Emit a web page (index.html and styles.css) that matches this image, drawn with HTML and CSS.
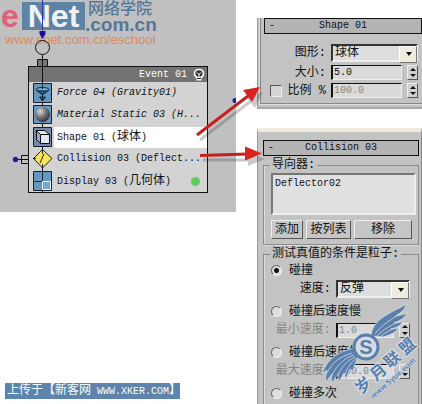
FILE: index.html
```html
<!DOCTYPE html>
<html lang="zh-CN">
<head>
<meta charset="utf-8">
<title>Event 01</title>
<link rel="stylesheet" href="styles.css">
</head>
<body>
<main class="page">
  <section class="left">
    <div class="scene">
      <div class="brand">
        <div class="brand-row">
          <span class="brand-e">e</span><span class="brand-net">Net</span>
          <span class="brand-side"><span class="brand-cn">网络学院</span><span class="brand-com">.com.cn</span></span>
        </div>
        <div class="brand-url">www.enet.com.cn/eschool</div>
      </div>
      <svg class="wires" width="236" height="212" viewBox="0 0 236 212" aria-hidden="true">
        <path d="M42.500 0V32" stroke="#3a329a"/>
        <path d="M39.500 31h6v3l-3 5-3-5z" fill="#1c0c9c"/>
        <circle cx="42.500" cy="47.500" r="7" fill="none" stroke="#111"/>
        <path d="M37.500 59.500h10v7h-10z" fill="#777" stroke="#111"/>
        <path d="M42.500 55V66M16 159.500h12M21.500 155.500h7v8h-7z" fill="none" stroke="#111"/>
        <circle cx="15.500" cy="159.500" r="2.700" fill="#1c1c9c"/>
        <circle cx="235" cy="100.500" r="2.500" fill="#1c1c9c"/>
      </svg>
      <div class="node">
        <header class="node-head">
          <span>Event 01</span>
          <svg width="12" height="14" viewBox="0 0 12 14" aria-hidden="true">
            <path d="M4 9.500C0 7 1 1.500 6 1.500s6 5.500 2 8z" fill="#333" stroke="#fff" stroke-width="1.500"/>
            <path d="M4 4.500l2 2 2-2M6 6v3" fill="none" stroke="#fff"/>
            <path d="M3.500 9h5v3.500h-5z" fill="#fff"/><path d="M4 10.500h4" stroke="#222"/>
          </svg>
        </header>
        <ul class="ops">
          <li class="op op-italic">
            <svg width="20" height="20" viewBox="0 0 20 20" aria-hidden="true"><path d="M.5.5h18v19H.5z" fill="#6796bf" stroke="#16212d"/><ellipse cx="9.500" cy="6.500" rx="6.500" ry="2" fill="#83abc9" stroke="#102c42"/><path d="M3 7l5 4h3l5-4M9.500 0v6M9.500 11v7M6.500 14l3 4 3-4z" fill="#245071" stroke="#102c42"/></svg>
            <span>Force 04 (Gravity01)</span></li>
          <li class="op op-italic">
            <svg width="20" height="20" viewBox="0 0 20 20" aria-hidden="true"><defs><radialGradient id="ball" cx=".35" cy=".3" r=".75"><stop stop-color="#ddd"/><stop offset=".4" stop-color="#8a8888"/><stop offset="1" stop-color="#2c2c30"/></radialGradient></defs><path d="M.5.5h18v18H.5z" fill="#6796bf" stroke="#16212d"/><circle cx="9.500" cy="9.500" r="7.500" fill="url(#ball)"/></svg>
            <span>Material Static 03 (H...</span></li>
          <li class="op op-selected">
            <svg width="20" height="20" viewBox="0 0 20 20" aria-hidden="true"><path d="M.5.5h18v19H.5z" fill="#7687aa" stroke="#16212d"/><path d="M3.500 3.500h8l5 4v9h-9l-4-4z" fill="#e4e8ef" stroke="#111"/><path d="M3.500 3.500l4 4v9l-4-4z" fill="#a0a9bd" stroke="#111"/><path d="M7.500 7.500h9" stroke="#111"/></svg>
            <span>Shape 01 (<b>球体</b>)</span></li>
          <li class="op">
            <svg width="20" height="20" viewBox="0 0 20 20" aria-hidden="true"><path d="M9.500.5l9.500 9-9.500 9.500-9-9.500z" fill="#f6e45a" stroke="#222"/><path d="M9.500 0v5M9.500 15v5M0 9.500h3M7 14l4-9" stroke="#222" fill="none"/></svg>
            <span>Collision 03 (Deflect...</span></li>
          <li class="op">
            <svg width="20" height="20" viewBox="0 0 20 20" aria-hidden="true"><path d="M.5.5h18v19H.5z" fill="#6796bf" stroke="#16212d"/><path d="M9.500 0v20M0 10.500h19" stroke="#16324a"/><path d="M9.500 10.500h8v8h-8z" fill="#78a7c9" stroke="#eafcff"/></svg>
            <span>Display 03 (<b>几何体</b>)</span><i class="dot"></i></li>
        </ul>
      </div>
    </div>
    <p class="upload"><b>上传于【新客网</b> WWW.XKER.COM<b>】</b></p>
  </section>

  <section class="right">
    <form class="panel shape-panel">
      <div class="frame">
        <h2 class="rollout"><span>-</span>Shape 01</h2>
        <div class="fields">
          <label for="shape">图形:</label>
          <span class="select"><select id="shape"><option>球体</option></select></span>
          <label for="size">大小:</label>
          <span class="spin"><input id="size" type="text" value="5.0"><span class="steps"><button type="button" aria-label="+"></button><button type="button" aria-label="-"></button></span></span>
          <span class="scale"><input id="scale-on" type="checkbox"><label for="scale-on">比例 %</label></span>
          <span class="spin off"><input type="text" value="100.0" aria-label="比例 %"><span class="steps"><button type="button" aria-label="+"></button><button type="button" aria-label="-"></button></span></span>
        </div>
      </div>
    </form>
    <form class="panel collision-panel">
      <h2 class="rollout"><span>-</span>Collision 03</h2>
      <fieldset class="group">
        <legend>导向器:</legend>
        <div class="list">Deflector02</div>
        <div class="buttons"><button type="button">添加</button><button type="button">按列表</button><button type="button">移除</button></div>
      </fieldset>
      <fieldset class="group tests">
        <legend>测试真值的条件是粒子:</legend>
        <label class="radio"><input type="radio" name="test" checked>碰撞</label>
        <div class="sub"><label for="speed">速度:</label><span class="select"><select id="speed"><option>反弹</option></select></span></div>
        <label class="radio"><input type="radio" name="test">碰撞后速度慢</label>
        <div class="sub off"><label for="min">最小速度:</label><span class="spin"><input id="min" type="text" value="1.0"><span class="steps"><button type="button" aria-label="+"></button><button type="button" aria-label="-"></button></span></span></div>
        <label class="radio"><input type="radio" name="test">碰撞后速度快</label>
        <div class="sub off"><label for="max">最大速度:</label><span class="spin"><input id="max" type="text" value="100.0"><span class="steps"><button type="button" aria-label="+"></button><button type="button" aria-label="-"></button></span></span></div>
        <label class="radio"><input type="radio" name="test">碰撞多次</label>
      </fieldset>
    </form>
  </section>

  <svg class="overlay" width="422" height="404" viewBox="0 0 422 404" aria-hidden="true">
    <g opacity=".25" transform="translate(3 5)"><path d="M197 135L248 96" stroke="#333" stroke-width="3"/><path d="M260 87l-8 16-9-11z" fill="#333"/><path d="M200 155h48" stroke="#333" stroke-width="3"/><path d="M262 154l-17 7v-14z" fill="#333"/></g>
    <path d="M197 135L248 96M200 155.500L248 154" stroke="#c5221f" stroke-width="3"/>
    <path d="M260 87l-8 15-9-12zM262 153.500l-17 7v-14z" fill="#d8231d"/>
    <g fill="#5b7fab" stroke="#d5dce5" stroke-width=".8">
      <path d="M371 336c2-16 13-20 36-32-3 6-6 9-11 12 5-1 9-2 11-3-3 6-8 8-13 10 4 0 7-1 9-2-3 6-8 7-12 8l7-1c-3 5-8 7-15 9z"/>
      <path d="M375 334c6-9 16-14 27-22M377 336c6-7 14-10 24-16M380 337c5-5 12-8 20-11" fill="none"/>
      <path d="M354 348c-10 3-25 6-32 26l5-4c-1 5-2 8-1 12l6-8c-1 4-1 6 0 9l6-9c0 4 0 6 1 8l5-9 2 6 4-10 3 2c2-8 4-12 6-15z"/>
      <path d="M352 353c-12 4-20 9-25 20M354 355c-9 3-17 10-22 20M355 357c-8 4-13 9-17 18M357 358c-6 4-10 10-12 17" fill="none"/>
    </g>
    <circle cx="366" cy="347" r="12" fill="#d5dce5" stroke="#5b7fab" stroke-width="3"/>
    <text class="seal-s" x="366" y="354" text-anchor="middle">S</text>
    <g transform="translate(363 385) rotate(-41)"><text class="seal-cn" x="-8" y="6">岁</text></g>
    <g transform="translate(378 372) rotate(-41)"><text class="seal-cn" x="-8" y="6">月</text></g>
    <g transform="translate(392 359) rotate(-41)"><text class="seal-cn" x="-8" y="6">联</text></g>
    <g transform="translate(407 346) rotate(-41)"><text class="seal-cn" x="-8" y="6">盟</text></g>
    <g transform="translate(373 399) rotate(-41)"><text class="seal-url">www.5yue.com</text></g>
  </svg>
</main>
</body>
</html>
```
FILE: styles.css
```css
* { box-sizing: border-box; }
body {
  margin: 0;
  background: #fff;
  color: #111;
  font: 10px/16px "Liberation Mono", "Noto Sans CJK SC", monospace;
}
b { font-size: 12px; font-weight: 400; }
.page {
  position: relative;
  display: grid;
  grid-template-columns: 236px minmax(0, 1fr);
  min-height: 100vh;
  overflow: hidden;
}
.left { display: flex; flex-direction: column; justify-content: space-between; }
.scene { position: relative; height: 212px; background: #c0c0c0; }
.wires, .overlay { position: absolute; top: 0; left: 0; }
.overlay { pointer-events: none; }

.brand { position: absolute; top: 2px; left: 0; font-family: "Liberation Sans", "Noto Sans CJK SC", sans-serif; }
.brand-row { display: flex; height: 28px; line-height: 28px; font-weight: 700; }
.brand-e { width: 22px; padding-left: 1px; color: #e06079; font-size: 32px; }
.brand-net { width: 63px; background: #5e83a5; color: #eef2f4; font-size: 32px; text-align: center; }
.brand-side { display: flex; flex-direction: column; color: #55779a; }
.brand-cn { padding-left: 3px; font-size: 16px; line-height: 14px; font-weight: 500; }
.brand-com { font-size: 19px; line-height: 18px; }
.brand-url { padding: 2px 0 0 5px; color: #dd8a5c; font-size: 13px; line-height: 16px; }

.node {
  position: absolute;
  top: 66px;
  left: 28px;
  width: 180px;
  border: 1px solid #111;
  background: #d3d3d3;
}
.node::before { content: ""; position: absolute; top: 0; bottom: 0; left: 13px; width: 1px; background: #111; }
.node-head {
  display: flex;
  align-items: center;
  justify-content: flex-end;
  gap: 6px;
  height: 15px;
  padding-right: 2px;
  background: #737373;
  color: #fff;
}
.ops { margin: 0; padding: 0; list-style: none; }
.op { display: flex; align-items: center; height: 22px; padding-left: 4px; }
.op svg { position: relative; flex: none; margin-right: 1px; }
.op span { flex: 1; padding-left: 3px; line-height: 20px; white-space: nowrap; }
.op-italic span { font-style: italic; }
.op-selected span { background: #fff; }
.dot { width: 9px; height: 9px; margin-right: 7px; border-radius: 50%; background: #5fce5f; }
.upload { width: 175px; height: 16px; margin: 0 0 5px 5px; padding-left: 2px; background: #5e83ac; color: #f2ffff; line-height: 16px; white-space: nowrap; }

.right { padding: 18px 0 0 21px; font-size: 10px; }
.panel { margin: 0; background: #c3c3c3; border-left: 1px solid #999; }
.shape-panel { height: 91px; padding-left: 2px; border-bottom: 2px solid #aaa; }
.frame { height: 86px; padding-left: 3px; border-left: 1px solid #888; border-bottom: 1px solid #888; box-shadow: -1px 1px #ddd; }
.rollout { position: relative; margin: 0; border: 1px solid #111; background: #b4b4b4; font-size: 10px; font-weight: 400; line-height: 14px; text-align: center; }
.rollout span { position: absolute; left: 4px; }
label, legend, .buttons button, select { font-family: "Liberation Mono", "Noto Sans CJK SC", monospace; font-size: 12px; }
.fields {
  display: grid;
  grid-template-columns: 62px minmax(0, 1fr);
  grid-template-rows: 19px 15px 15px;
  gap: 3px 5px;
  align-items: center;
  padding: 9px 4px 0 0;
}
.fields > label { text-align: right; }
.scale { display: flex; align-items: center; justify-content: flex-end; gap: 6px; white-space: nowrap; }
input, select, button { margin: 0; border-radius: 0; }
input[type="checkbox"] { appearance: none; width: 12px; height: 12px; border: 1px solid; border-color: #555 #eee #eee #555; background: #d4d4d4; }
.select { position: relative; display: flex; height: 18px; }
.select select { appearance: none; width: 100%; padding: 0 2px; border: 2px solid; border-color: #333 #eee #eee #333; background: #dedede; color: #111; line-height: 14px; }
.select::after { content: ""; position: absolute; top: 2px; right: 1px; width: 16px; height: 15px; border: 1px solid; border-color: #fff #777 #777 #fff; background: #eeebdf; }
.select::before { content: ""; position: absolute; z-index: 1; top: 8px; right: 6px; border: 4px solid transparent; border-top-color: #111; border-bottom: 0; border-right-width: 3px; border-left-width: 3px; }
.spin { display: flex; gap: 5px; height: 15px; }
.spin input { flex: 1; min-width: 0; padding: 0 1px; border: 1px solid; border-color: #111 #eee #eee #111; border-left-width: 2px; background: #dadada; color: #111; font: 10px "Liberation Mono", monospace; }
.steps { display: flex; flex-direction: column; width: 11px; border: 1px solid; border-color: #eee #555 #555 #eee; }
.steps button { display: flex; flex: 1; align-items: center; justify-content: center; padding: 0; border: 0; background: #d0d0d0; }
.steps button::before { content: ""; border: 3px solid transparent; border-top: 0; border-bottom-color: #111; }
.steps button + button::before { border-top: 3px solid #111; border-bottom: 0; }
.spin.off input, .off .spin input, .sub.off label { color: #858585; }

.collision-panel { height: 276px; margin-top: 19px; padding: 8px 2px 0 5px; border-top: 4px solid #eeeade; border-right: 1px solid #888; }
.group { min-width: 0; margin: 1px 0 0; padding: 0 2px 5px 7px; border: 1px solid #8b8b8b; box-shadow: inset 1px 0 #ddd, 0 1px #ddd; }
.group legend { margin-left: -1px; padding: 0 2px; line-height: 16px; }
.list { height: 42px; padding: 1px 2px; border: 2px solid; border-color: #777 #eee #eee #777; background: #e0e0e0; }
.buttons { display: grid; grid-template-columns: 32px 45px minmax(0, 1fr); gap: 3px; margin-top: 5px; padding-right: 4px; }
.buttons button { height: 19px; padding: 0; border: 1px solid; border-color: #eee #555 #555 #eee; background: #c6c6c6; color: #111; line-height: 16px; }
.tests { height: 172px; padding-right: 8px; }
.radio { display: flex; align-items: center; gap: 7px; height: 17px; }
.radio input { appearance: none; width: 11px; height: 11px; border: 1px solid; border-color: #666 #eee #eee #666; border-radius: 50%; background: #ddd; }
.radio input:checked { background: radial-gradient(circle, #111 0 2px, #ddd 3px); }
.sub { display: grid; grid-template-columns: 60px minmax(0, 1fr); gap: 5px; align-items: center; height: 20px; margin-bottom: 4px; }
.sub label { text-align: right; white-space: nowrap; }

.seal-s { fill: #5b7fab; font: 700 20px "Liberation Sans", sans-serif; }
.seal-cn { fill: #5b7fab; stroke: #dbe3ec; stroke-width: 2px; paint-order: stroke; font: 700 16px "Noto Sans CJK SC", sans-serif; }
.seal-url { fill: #5b7fab; stroke: #dbe3ec; stroke-width: 1px; paint-order: stroke; font: 700 8px "Liberation Sans", sans-serif; }
```
